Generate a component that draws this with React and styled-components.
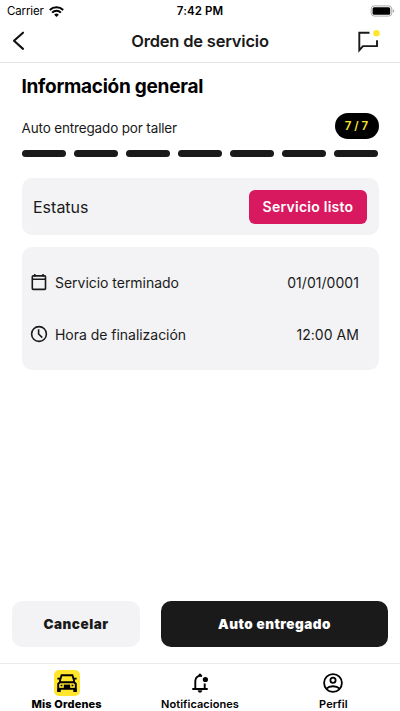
import React from 'react';
import styled, { createGlobalStyle } from 'styled-components';

const GlobalStyle = createGlobalStyle`
    * {
        box-sizing: border-box;
    }

    body {
        margin: 0;
        font-family: Inter, 'Liberation Sans', sans-serif;
        color: #1a1a1a;
        background: #fff;
    }

    button {
        padding: 0;
        border: none;
        font-family: inherit;
        color: inherit;
        background: none;
    }

    svg {
        display: block;
    }
`;

const Screen = styled.div`
    display: flex;
    flex-direction: column;
    width: 100%;
    height: 711px;
    overflow: hidden;
    background: #fff;
`;

const StatusBar = styled.div`
    display: grid;
    grid-template-columns: 1fr auto 1fr;
    align-items: center;
    height: 20px;
    padding: 0 5px 0 7px;
    line-height: 22px;
    color: #000;
`;

const Carrier = styled.div`
    display: flex;
    align-items: center;
    gap: 5px;
    font-size: 11.5px;
    letter-spacing: -0.15px;
`;

const Clock = styled.div`
    padding-right: 2px;
    font-size: 11.5px;
    font-weight: 600;
    letter-spacing: 0.1px;
`;

const BatterySlot = styled.div`
    justify-self: end;
`;

const Header = styled.header`
    display: grid;
    grid-template-columns: 60px 1fr 60px;
    align-items: center;
    height: 43px;
    border-bottom: 1px solid #e4e4e4;
`;

const HeaderTitle = styled.h1`
    margin: 0;
    text-align: center;
    font-size: 16.5px;
    font-weight: 600;
    letter-spacing: -0.2px;
`;

const BackButton = styled.button`
    justify-self: start;
    margin-left: 12px;
`;

const ChatButton = styled.button`
    justify-self: start;
    margin-left: 17px;
`;

const Content = styled.main`
    flex: 1;
    padding: 11px 21.5px 0;
`;

const SectionTitle = styled.h2`
    margin: 0;
    font-size: 19px;
    font-weight: 700;
    line-height: 26px;
    letter-spacing: -0.27px;
    color: #000;
`;

const Progress = styled.div`
    display: flex;
    align-items: center;
    justify-content: space-between;
    height: 26px;
    margin-top: 13px;
`;

const Step = styled.span`
    padding-top: 4px;
    font-size: 13.5px;
    letter-spacing: -0.15px;
`;

const Counter = styled.span`
    width: 44px;
    height: 26px;
    border-radius: 13px;
    text-align: center;
    font-size: 11.5px;
    font-weight: 600;
    line-height: 27px;
    color: #ffe52b;
    background: #000;
`;

const Bars = styled.div`
    display: grid;
    grid-template-columns: repeat(7, 1fr);
    gap: 8px;
    margin-top: 11px;
`;

const Bar = styled.span`
    height: 7px;
    border-radius: 4px;
    background: #1a1a1a;
`;

const StatusCard = styled.section`
    display: flex;
    align-items: center;
    justify-content: space-between;
    height: 57px;
    margin-top: 21px;
    padding: 0 11.5px;
    border-radius: 10px;
    font-size: 16px;
    background: #f3f3f5;
`;

const StatusTag = styled.span`
    width: 118px;
    height: 34px;
    border-radius: 6px;
    text-align: center;
    font-size: 14px;
    font-weight: 600;
    line-height: 34px;
    letter-spacing: 0.25px;
    color: #fff;
    background: #d9195f;
`;

const InfoCard = styled.section`
    height: 123px;
    margin-top: 12px;
    padding: 9px 19.5px 0 8.5px;
    border-radius: 10px;
    background: #f3f3f5;
`;

const InfoRow = styled.div`
    display: flex;
    align-items: center;
    height: 52px;
    font-size: 14px;
`;

const InfoLabel = styled.span`
    flex: 1;
    padding-left: 7px;
    letter-spacing: -0.03px;
`;

const InfoValue = styled.span`
    letter-spacing: 0.05px;
`;

const Actions = styled.div`
    display: grid;
    grid-template-columns: 128px 1fr;
    gap: 21px;
    height: 62px;
    padding: 0 12px 16px;
`;

const ActionButton = styled.button`
    padding-bottom: 1px;
    border-radius: 10px;
    font-size: 13.5px;
    font-weight: 900;
    letter-spacing: 0.5px;
    color: ${({ $primary }) => ($primary ? '#fff' : '#1a1a1a')};
    background: ${({ $primary }) => ($primary ? '#1a1a1a' : '#f3f3f5')};
`;

const TabBar = styled.nav`
    display: grid;
    grid-template-columns: repeat(3, 1fr);
    height: 48px;
    border-top: 1px solid #ebebed;
`;

const Tab = styled.button`
    display: flex;
    flex-direction: column;
    align-items: center;
    padding-top: 6px;
    font-size: 11px;
    font-weight: ${({ $active }) => ($active ? 800 : 600)};
    line-height: 16px;
    letter-spacing: ${({ $active }) => ($active ? '0.15px' : '0.05px')};
    color: #000;
`;

const TabIcon = styled.span`
    display: flex;
    align-items: center;
    justify-content: center;
    width: 26px;
    height: 26px;
    border-radius: 5px;
    background: ${({ $active }) => ($active ? '#ffe52b' : 'transparent')};
`;

const WifiIcon = () => (
    <svg width='15' height='11' viewBox='0 0 15 11' fill='none' stroke='#000' strokeWidth='2'>
        <path d='M.8 4a9.6 9.6 0 0 1 13.4 0' />
        <path d='M3.1 6.6a6.2 6.2 0 0 1 8.8 0' />
        <path d='M7.5 11 5.2 8.7a3.3 3.3 0 0 1 4.6 0z' fill='#000' stroke='none' />
    </svg>
);

const BatteryIcon = () => (
    <svg width='25' height='12' viewBox='0 0 25 12'>
        <rect x='1.2' y='.9' width='20.6' height='10.2' rx='3' fill='#fff' stroke='#aaa' />
        <rect x='2.6' y='2.3' width='17.6' height='7.4' rx='1.5' fill='#000' />
        <path d='M22.8 4.2q1.5.5 1.5 1.8t-1.5 1.8z' fill='#aaa' />
    </svg>
);

const BackIcon = () => (
    <svg width='13' height='20' viewBox='0 0 13 20' fill='none' stroke='#111' strokeWidth='2.1'>
        <path d='M11 1.7 2 9.7l9 8.2' strokeLinecap='round' strokeLinejoin='round' />
    </svg>
);

const ChatIcon = () => (
    <svg width='24' height='24' viewBox='0 0 24 24'>
        <path
            d='M12.5 3.8H2.3v17.4l3.7-4.1h14V11.3'
            fill='none'
            stroke='#1a1a1a'
            strokeWidth='1.9'
        />
        <circle cx='19.5' cy='4.3' r='3.2' fill='#ffe52b' />
    </svg>
);

const CalendarIcon = () => (
    <svg width='18' height='18' viewBox='0 0 18 18' fill='none' stroke='#1a1a1a' strokeWidth='1.6'>
        <rect x='2.3' y='2.9' width='13.2' height='13.5' rx='.8' />
        <path d='M2 6.2h14M4.8 1v2.5M13 1v2.5' />
    </svg>
);

const ClockIcon = () => (
    <svg width='18' height='18' viewBox='0 0 18 18' fill='none' stroke='#1a1a1a' strokeWidth='1.6'>
        <circle cx='9' cy='9' r='7.4' />
        <path d='M8.6 4.2V9l3.7 3.6' />
    </svg>
);

const CarIcon = () => (
    <svg width='22' height='20' viewBox='0 0 22 20' fill='none' stroke='#000' strokeWidth='1.9'>
        <path d='M4 9.2V7.3L5.6 2.2h10.8L18 7.3v1.9' />
        <path d='M2.2 19V10.8L4 9.2h14l1.8 1.6V19' />
        <path d='M1.4 5.6h3M17.6 5.6h3' />
        <path d='M2 15.8h18' />
        <path d='M3.1 15v4M18.9 15v4' strokeWidth='3.2' />
        <path d='M7.8 11.6h6.4v4.5H7.8z' fill='#000' stroke='none' />
        <path d='M4.6 12.5h1.8M15.6 12.5h1.8' strokeWidth='1.6' />
    </svg>
);

const BellIcon = () => (
    <svg width='20' height='22' viewBox='0 0 20 22'>
        <path
            d='M12 4.2C8.4 2.9 5.3 5.5 5.3 9v7.5M14.7 11.5v5M2.3 17h15.4'
            fill='none'
            stroke='#000'
            strokeWidth='1.9'
        />
        <path d='M8.5 4V3a1.5 1.5 0 0 1 3 0v1z' />
        <circle cx='15.4' cy='7.5' r='2.6' />
        <path d='M8 18.4h4a2 2 0 0 1-4 0z' stroke='#000' strokeWidth='.4' />
    </svg>
);

const ProfileIcon = () => (
    <svg width='22' height='22' viewBox='0 0 22 22' fill='none' stroke='#000' strokeWidth='1.8'>
        <circle cx='11' cy='11' r='8.9' />
        <circle cx='11' cy='8.2' r='2.6' />
        <path d='M4.4 16.7c3.2-3.3 10-3.3 13.2 0' />
    </svg>
);

const steps = [1, 2, 3, 4, 5, 6, 7];

const details = [
    { icon: <CalendarIcon />, label: 'Servicio terminado', value: '01/01/0001' },
    { icon: <ClockIcon />, label: 'Hora de finalización', value: '12:00 AM' },
];

const tabs = [
    { icon: <CarIcon />, label: 'Mis Ordenes', active: true },
    { icon: <BellIcon />, label: 'Notificaciones' },
    { icon: <ProfileIcon />, label: 'Perfil' },
];

const App = () => (
    <Screen>
        <GlobalStyle />
        <StatusBar>
            <Carrier>
                Carrier
                <WifiIcon />
            </Carrier>
            <Clock>7:42 PM</Clock>
            <BatterySlot>
                <BatteryIcon />
            </BatterySlot>
        </StatusBar>
        <Header>
            <BackButton aria-label='Volver'>
                <BackIcon />
            </BackButton>
            <HeaderTitle>Orden de servicio</HeaderTitle>
            <ChatButton aria-label='Mensajes'>
                <ChatIcon />
            </ChatButton>
        </Header>
        <Content>
            <SectionTitle>Información general</SectionTitle>
            <Progress>
                <Step>Auto entregado por taller</Step>
                <Counter>7 / 7</Counter>
            </Progress>
            <Bars>
                {steps.map((step) => (
                    <Bar key={step} />
                ))}
            </Bars>
            <StatusCard>
                Estatus
                <StatusTag>Servicio listo</StatusTag>
            </StatusCard>
            <InfoCard>
                {details.map((item) => (
                    <InfoRow key={item.label}>
                        {item.icon}
                        <InfoLabel>{item.label}</InfoLabel>
                        <InfoValue>{item.value}</InfoValue>
                    </InfoRow>
                ))}
            </InfoCard>
        </Content>
        <Actions>
            <ActionButton>Cancelar</ActionButton>
            <ActionButton $primary>Auto entregado</ActionButton>
        </Actions>
        <TabBar>
            {tabs.map((tab) => (
                <Tab key={tab.label} $active={tab.active}>
                    <TabIcon $active={tab.active}>{tab.icon}</TabIcon>
                    {tab.label}
                </Tab>
            ))}
        </TabBar>
    </Screen>
);

export default App;
